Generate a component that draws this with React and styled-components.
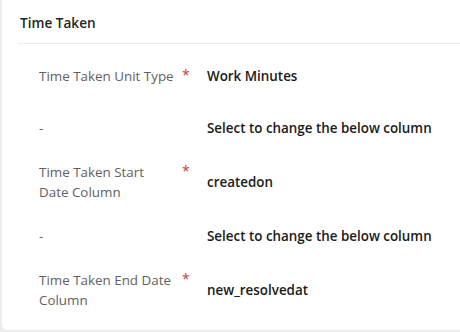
import styled, { createGlobalStyle } from "styled-components";

const GlobalStyle = createGlobalStyle`
  html, body {
    margin: 0;
    padding: 0;
    background: #eeeeee;
  }
  body {
    font-family: "Open Sans", "Noto Sans", sans-serif;
  }
`;

const rows = [
  { label: "Time Taken Unit Type", required: true, value: "Work Minutes" },
  { label: "-", required: false, value: "Select to change the below column" },
  { label: "Time Taken Start Date Column", required: true, value: "createdon" },
  { label: "-", required: false, value: "Select to change the below column" },
  { label: "Time Taken End Date Column", required: true, value: "new_resolvedat" },
];

const App = () => {
  return (
    <>
      <GlobalStyle />
      <Page>
        <Card>
          <Header>
            <Title>Time Taken</Title>
          </Header>
          <Body>
            {rows.map((row, i) => (
              <Row key={i}>
                <LabelCell>
                  <Label>{row.label}</Label>
                  <Star>{row.required ? "*" : ""}</Star>
                </LabelCell>
                <Value>{row.value}</Value>
              </Row>
            ))}
          </Body>
        </Card>
      </Page>
    </>
  );
};

//styles
const Page = styled.div`
  width: 460px;
  height: 332px;
  padding: 0 0 2px 2px;
  box-sizing: border-box;
  overflow: hidden;
`;
const Card = styled.div`
  background: #ffffff;
  height: 100%;
  width: 470px;
  border-radius: 0 0 0 6px;
  padding-left: 16px;
  box-sizing: border-box;
`;
const Header = styled.div`
  height: 44px;
  display: flex;
  align-items: flex-end;
  padding: 0 0 10px 2px;
  border-bottom: 1px solid #ebebeb;
  box-sizing: border-box;
`;
const Title = styled.h2`
  margin: 0;
  font-size: 13.6px;
  font-weight: 600;
  line-height: 20px;
  color: #242424;
`;
const Body = styled.div`
  display: flex;
  flex-direction: column;
  padding: 6px 0 0 21px;
`;
const Row = styled.div`
  display: flex;
  align-items: center;
  min-height: 52px;
  padding: 8px 0;
  box-sizing: border-box;
`;
const LabelCell = styled.div`
  width: 168px;
  display: flex;
  align-items: flex-start;
  justify-content: space-between;
`;
const Label = styled.span`
  width: 135px;
  font-size: 13.4px;
  line-height: 20px;
  color: #616161;
`;
const Star = styled.span`
  width: 25px;
  font-size: 14px;
  line-height: 18px;
  color: #d13438;
`;
const Value = styled.span`
  font-size: 13.4px;
  font-weight: 600;
  line-height: 20px;
  color: #1a1a1a;
`;

export default App;
